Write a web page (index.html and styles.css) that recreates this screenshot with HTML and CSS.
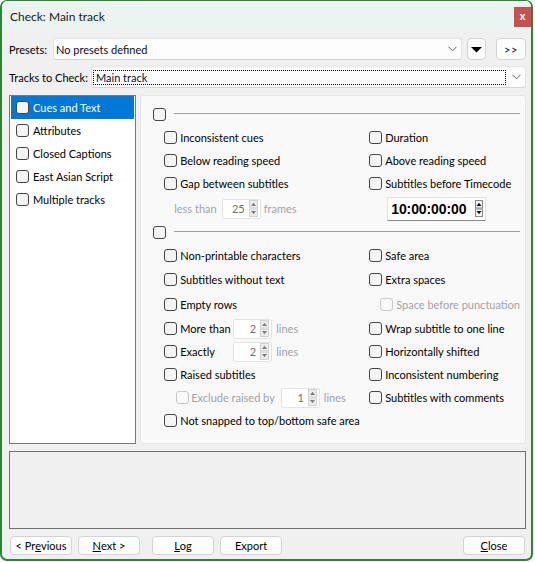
FILE: index.html
```
<!DOCTYPE html>
<html>
<head>
<meta charset="utf-8">
<title>Check: Main track</title>
<link rel="stylesheet" href="styles.css">
</head>
<body>
<div class="window">
  <div class="titlebar">
    <span class="title">Check: Main track</span>
    <span class="close">x</span>
  </div>
  <div class="content">
    <div class="row">
      <span class="lbl lbl-presets">Presets:</span>
      <div class="combo combo-presets">
        <span class="combo-text">No presets defined</span>
        <svg class="chev" width="9" height="6" viewBox="0 0 9 6"><path d="M0.5 0.8 L4.5 4.8 L8.5 0.8" fill="none" stroke="#5f5f5f" stroke-width="1"/></svg>
      </div>
      <div class="btn btn-tri"><svg width="11" height="6" viewBox="0 0 11 6"><path d="M0 0 H11 L5.5 5.5 Z" fill="#000"/></svg></div>
      <div class="btn btn-more">&gt;&gt;</div>
    </div>
    <div class="row row-tracks">
      <span class="lbl lbl-tracks">Tracks to Check:</span>
      <div class="combo combo-tracks">
        <span class="focus">Main track</span>
        <svg class="chev" width="9" height="6" viewBox="0 0 9 6"><path d="M0.5 0.8 L4.5 4.8 L8.5 0.8" fill="none" stroke="#5f5f5f" stroke-width="1"/></svg>
      </div>
    </div>
    <div class="main">
      <ul class="list">
        <li class="item sel"><span class="cb"></span><span>Cues and Text</span></li>
        <li class="item"><span class="cb"></span><span>Attributes</span></li>
        <li class="item"><span class="cb"></span><span>Closed Captions</span></li>
        <li class="item"><span class="cb"></span><span>East Asian Script</span></li>
        <li class="item"><span class="cb"></span><span>Multiple tracks</span></li>
      </ul>
      <div class="panel">
        <div class="ghead ghead-1"><span class="cb"></span><span class="gline"></span></div>
        <div class="grid grid-1">
          <div class="chk"><span class="cb"></span><span>Inconsistent cues</span></div>
          <div class="chk"><span class="cb"></span><span>Duration</span></div>
          <div class="chk"><span class="cb"></span><span>Below reading speed</span></div>
          <div class="chk"><span class="cb"></span><span>Above reading speed</span></div>
          <div class="chk"><span class="cb"></span><span>Gap between subtitles</span></div>
          <div class="chk"><span class="cb"></span><span>Subtitles before Timecode</span></div>
          <div class="cell spinrow">
            <span class="dis lt">less than</span>
            <div class="spin spin-frames"><span class="val">25</span>
              <svg class="arrows" width="9" height="17" viewBox="0 0 9 17"><rect x="0.5" y="0.5" width="8" height="7.5" fill="#ececec" stroke="#d2d2d2"/><rect x="0.5" y="9" width="8" height="7.5" fill="#ececec" stroke="#d2d2d2"/><path d="M2 6 H7 L4.5 2.8 Z" fill="#808080"/><path d="M2 11 H7 L4.5 14.2 Z" fill="#808080"/></svg>
            </div>
            <span class="dis fr">frames</span>
          </div>
          <div class="cell">
            <div class="tc"><span class="tc-val">10:00:00:00</span>
              <svg class="tc-arrows" width="8" height="17" viewBox="0 0 8 17"><rect x="0.5" y="0.5" width="7" height="7.5" fill="#f4f4f4" stroke="#8a8a8a"/><rect x="0.5" y="9" width="7" height="7.5" fill="#f4f4f4" stroke="#8a8a8a"/><path d="M1.5 6 H6.5 L4 2.8 Z" fill="#111"/><path d="M1.5 11 H6.5 L4 14.2 Z" fill="#111"/></svg>
            </div>
          </div>
        </div>
        <div class="ghead ghead-2"><span class="cb"></span><span class="gline"></span></div>
        <div class="grid grid-2">
          <div class="chk"><span class="cb"></span><span>Non-printable characters</span></div>
          <div class="chk"><span class="cb"></span><span>Safe area</span></div>
          <div class="chk"><span class="cb"></span><span>Subtitles without text</span></div>
          <div class="chk"><span class="cb"></span><span>Extra spaces</span></div>
          <div class="chk"><span class="cb"></span><span>Empty rows</span></div>
          <div class="chk sub dis"><span class="cb"></span><span>Space before punctuation</span></div>
          <div class="cell">
            <div class="chk fixed"><span class="cb"></span><span>More than</span></div>
            <div class="spin spin-lines"><span class="val">2</span>
              <svg class="arrows" width="9" height="17" viewBox="0 0 9 17"><rect x="0.5" y="0.5" width="8" height="7.5" fill="#ececec" stroke="#d2d2d2"/><rect x="0.5" y="9" width="8" height="7.5" fill="#ececec" stroke="#d2d2d2"/><path d="M2 6 H7 L4.5 2.8 Z" fill="#808080"/><path d="M2 11 H7 L4.5 14.2 Z" fill="#808080"/></svg>
            </div>
            <span class="dis ln">lines</span>
          </div>
          <div class="chk"><span class="cb"></span><span>Wrap subtitle to one line</span></div>
          <div class="cell">
            <div class="chk fixed"><span class="cb"></span><span>Exactly</span></div>
            <div class="spin spin-lines"><span class="val">2</span>
              <svg class="arrows" width="9" height="17" viewBox="0 0 9 17"><rect x="0.5" y="0.5" width="8" height="7.5" fill="#ececec" stroke="#d2d2d2"/><rect x="0.5" y="9" width="8" height="7.5" fill="#ececec" stroke="#d2d2d2"/><path d="M2 6 H7 L4.5 2.8 Z" fill="#808080"/><path d="M2 11 H7 L4.5 14.2 Z" fill="#808080"/></svg>
            </div>
            <span class="dis ln">lines</span>
          </div>
          <div class="chk"><span class="cb"></span><span>Horizontally shifted</span></div>
          <div class="chk"><span class="cb"></span><span>Raised subtitles</span></div>
          <div class="chk"><span class="cb"></span><span>Inconsistent numbering</span></div>
          <div class="cell">
            <div class="chk sub-ex dis"><span class="cb"></span><span>Exclude raised by</span></div>
            <div class="spin spin-ex"><span class="val">1</span>
              <svg class="arrows" width="9" height="17" viewBox="0 0 9 17"><rect x="0.5" y="0.5" width="8" height="7.5" fill="#ececec" stroke="#d2d2d2"/><rect x="0.5" y="9" width="8" height="7.5" fill="#ececec" stroke="#d2d2d2"/><path d="M2 6 H7 L4.5 2.8 Z" fill="#808080"/><path d="M2 11 H7 L4.5 14.2 Z" fill="#808080"/></svg>
            </div>
            <span class="dis ln">lines</span>
          </div>
          <div class="chk"><span class="cb"></span><span>Subtitles with comments</span></div>
          <div class="chk"><span class="cb"></span><span>Not snapped to top/bottom safe area</span></div>
          <div class="cell"></div>
        </div>
      </div>
    </div>
    <div class="output"></div>
    <div class="buttons">
      <div class="btn pbtn b-prev">&lt; Pr<u>e</u>vious</div>
      <div class="btn pbtn b-next"><u>N</u>ext &gt;</div>
      <div class="btn pbtn b-log"><u>L</u>og</div>
      <div class="btn pbtn b-exp">Export</div>
      <div class="btn pbtn b-close"><u>C</u>lose</div>
    </div>
  </div>
</div>
</body>
</html>
```
FILE: styles.css
```
html, body {
  margin: 0;
  padding: 0;
  background: #ffffff;
}
body {
  font-family: "Lato", "Liberation Sans", sans-serif;
  font-size: 11px;
  color: #000;
}
.window {
  position: relative;
  width: 533px;
  height: 561px;
  box-sizing: border-box;
  border: 2px solid #2c8532;
  border-top-width: 1px;
  border-radius: 7px;
  background: #f0f0f0;
  overflow: hidden;
  display: flex;
  flex-direction: column;
}
.window::before {
  content: "";
  position: absolute;
  top: -1px;
  left: 226px;
  width: 90px;
  height: 1px;
  background: #2b2b2b;
}
.titlebar {
  height: 30px;
  flex: none;
  background: #ebf4f1;
  display: flex;
  align-items: center;
  padding-left: 8px;
}
.title {
  font-size: 12px;
  color: #1a1a1a;
  margin-top: 0;
}
.close {
  margin-left: auto;
  width: 17px;
  height: 20px;
  margin-top: 1px;
  background: #c75050;
  color: #fff;
  font-family: "Liberation Sans", sans-serif;
  font-weight: bold;
  font-size: 11px;
  display: flex;
  align-items: center;
  justify-content: center;
  padding-bottom: 2px;
  box-sizing: border-box;
}
.content {
  flex: 1;
  display: flex;
  flex-direction: column;
  padding: 7px 5px 0 7px;
}
.row {
  height: 22px;
  display: flex;
  align-items: center;
}
.row-tracks {
  margin-top: 6px;
}
.lbl {
  flex: none;
}
.lbl-presets { width: 44px; }
.lbl-tracks { width: 82px; }
.combo {
  height: 22px;
  box-sizing: border-box;
  background: #fdfdfd;
  border: 1px solid #e3e3e3;
  border-bottom-color: #d4d4d4;
  border-radius: 3px;
  display: flex;
  align-items: center;
}
.combo-presets {
  flex: 1;
  padding-left: 2px;
}
.combo-tracks {
  flex: 1;
  padding-left: 1px;
}
.combo-text {
  flex: 1;
  color: #0b0b1e;
}
.focus {
  flex: 1;
  height: 15px;
  box-sizing: border-box;
  border: 1px dotted #000;
  padding-left: 2px;
  line-height: 13px;
  color: #0b0b1e;
  margin-right: 6px;
}
.chev {
  flex: none;
  margin-right: 4px;
}
.btn {
  box-sizing: border-box;
  background: #fdfdfd;
  border: 1px solid #d3d3d3;
  border-radius: 4px;
  display: flex;
  align-items: center;
  justify-content: center;
}
.btn-tri {
  width: 19px;
  height: 22px;
  margin-left: 5px;
}
.btn-tri svg { margin-top: 1px; }
.btn-more {
  width: 30px;
  height: 22px;
  margin-left: 10px;
  color: #0b0b40;
  font-size: 11px;
  letter-spacing: 0.5px;
}
.main {
  margin-top: 7px;
  height: 349px;
  flex: none;
  display: flex;
}
.list {
  list-style: none;
  margin: 0;
  padding: 0;
  width: 128px;
  box-sizing: border-box;
  border: 1px solid #7a7a7a;
  background: #fff;
}
.item {
  height: 23px;
  margin: 0 1px;
  padding-left: 5px;
  display: flex;
  align-items: center;
  gap: 4px;
}
.item.sel {
  background: #0078d7;
  color: #fff;
}
.cb {
  flex: none;
  width: 13px;
  height: 13px;
  box-sizing: border-box;
  border: 1px solid #454545;
  border-radius: 3px;
  background: #f5f5f5;
}
.panel {
  flex: 1;
  margin-left: 4px;
  box-sizing: border-box;
  background: #f9f9f9;
  border: 1px solid #e6e6e6;
  border-radius: 3px;
  padding: 7px 5px 0 12px;
}
.ghead {
  display: flex;
  align-items: center;
}
.ghead-1 { height: 23px; }
.ghead-2 { height: 21px; }
.gline {
  flex: 1;
  height: 1px;
  background: #a0a0a0;
  margin-left: 8px;
  margin-bottom: 2px;
}
.grid {
  display: grid;
  grid-template-columns: 205px 1fr;
  margin-left: 11px;
}
.grid-1 {
  grid-template-rows: 23px 23px 23px 27px;
}
.grid-2 {
  grid-template-rows: 24px 25px 25px 23px 23px 23px 23px 23px;
}
.chk {
  display: flex;
  align-items: center;
  gap: 3px;
  white-space: nowrap;
}
.cell {
  display: flex;
  align-items: center;
  white-space: nowrap;
}
.dis {
  color: #a2a2a8;
}
.chk.dis .cb {
  border-color: #c8c8c8;
  background: #f9f9f9;
}
.sub {
  margin-left: 11px;
}
.sub-ex {
  margin-left: 12px;
  gap: 2px;
}
.fixed {
  width: 69px;
}
.lt { margin-left: 10px; }
.spin {
  height: 20px;
  box-sizing: border-box;
  background: #fff;
  border: 1px solid #e4e4e4;
  border-radius: 2px;
  display: flex;
  align-items: center;
  justify-content: flex-end;
  padding-right: 2px;
}
.spin .val {
  color: #6e6e6e;
  margin-right: 4px;
}
.spin-frames {
  width: 39px;
  margin-left: 5px;
}
.spin-lines {
  width: 39px;
}
.spin-ex {
  width: 39px;
  margin-left: 6px;
}
.fr { margin-left: 3px; }
.ln { margin-left: 4px; }
.tc {
  margin-left: 18px;
  width: 99px;
  height: 24px;
  box-sizing: border-box;
  background: #fff;
  border: 1px solid #e2e2e2;
  border-bottom-color: #8a8a8a;
  display: flex;
  align-items: center;
  padding-left: 3px;
}
.tc-val {
  flex: 1;
  font-family: "Liberation Sans", sans-serif;
  font-weight: bold;
  font-size: 14px;
  color: #000;
  letter-spacing: -0.1px;
}
.tc-arrows {
  margin-right: 2px;
}
.output {
  margin-top: 7px;
  height: 78px;
  flex: none;
  box-sizing: border-box;
  border: 1px solid #707070;
  background: #f0f0f0;
}
.buttons {
  margin-top: 7px;
  display: flex;
  align-items: center;
}
.pbtn {
  width: 62px;
  height: 19px;
  font-size: 11px;
}
.pbtn u {
  text-underline-offset: 1px;
}
.b-prev { margin-left: 1px; }
.b-next { margin-left: 6px; }
.b-log { margin-left: 12px; }
.b-exp { margin-left: 6px; }
.b-close { margin-left: auto; margin-right: 1px; }
```
